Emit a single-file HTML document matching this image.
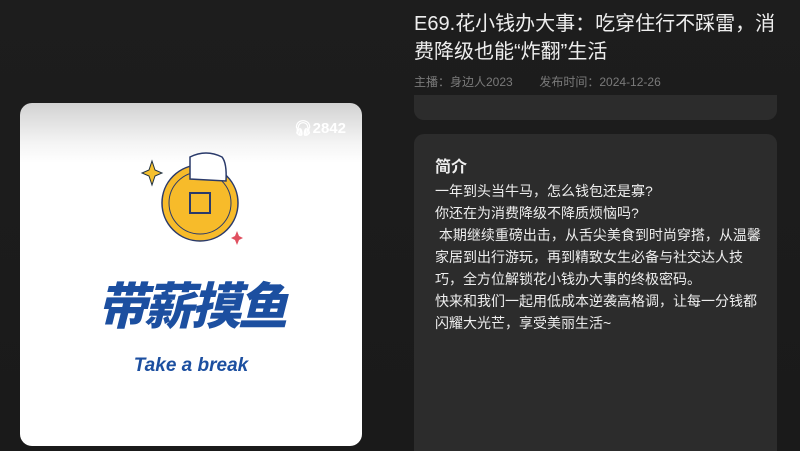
<!DOCTYPE html>
<html><head><meta charset="utf-8"><style>
*{margin:0;padding:0;box-sizing:border-box}
html,body{width:800px;height:451px;overflow:hidden}
body{background:linear-gradient(#1d1d1d,#1a1a1a);font-family:"Liberation Sans","Noto Sans CJK SC",sans-serif;position:relative}
.cover{position:absolute;left:20px;top:103px;width:342px;height:343px;border-radius:12px;overflow:hidden;background:linear-gradient(#d2d2d2 0,#f4f4f4 40px,#fff 60px)}
.cnt{position:absolute;right:16px;top:16px;color:#fff;font-weight:bold;font-size:15px}
.big{position:absolute;left:56px;top:164px;width:230px;text-align:center;font-size:50px;font-weight:900;color:#1c4fa0;font-style:italic;letter-spacing:-3px;font-family:"Noto Sans CJK SC",sans-serif}
.tab{position:absolute;left:0;width:342px;top:252px;text-align:center;font-size:19px;font-weight:bold;font-style:italic;color:#1c4fa0}
h1{position:absolute;left:414px;top:10px;white-space:nowrap;color:#eee;font-size:20px;font-weight:normal;line-height:28px}
.meta{position:absolute;left:414px;top:73px;font-size:12px;color:#7a7a7a}
.strip{position:absolute;left:414px;top:95px;width:363px;height:25px;background:#2c2c2c;border-radius:0 0 10px 10px}
.card{position:absolute;left:414px;top:134px;width:363px;height:317px;background:#2c2c2c;border-radius:10px 10px 0 0}
.card h2{position:absolute;left:21px;top:19px;font-size:16px;color:#eee}
.card p{position:absolute;left:21px;top:46px;white-space:nowrap;font-size:14px;line-height:22px;color:#eee}
</style></head><body>
<div class="cover">
<div class="cnt">🎧︎2842</div>
<svg style="position:absolute;left:0;top:0" width="342" height="200">
<path d="M132 58 l3 9 l7 3 l-7 3 l-3 9 l-3 -9 l-7 -3 l7 -3z" fill="#f5c02e" stroke="#234" stroke-width="1"/>
<path d="M217 128 l2 5 l4 2 l-4 2 l-2 5 l-2 -5 l-4 -2 l4 -2z" fill="#e05060"/>
<circle cx="180" cy="100" r="38" fill="#f7bb2a" stroke="#2a3a6a" stroke-width="1.5"/>
<circle cx="180" cy="100" r="31" fill="none" stroke="#2a3a6a" stroke-width="1"/>
<rect x="170" y="90" width="20" height="20" fill="none" stroke="#2a3a6a" stroke-width="2"/>
<path d="M170 76 v-22 q16 -8 32 0 q5 6 4 24 z" fill="#fff" stroke="#2a3a6a" stroke-width="1.5"/>
</svg>
<div class="big">带薪摸鱼</div>
<div class="tab">Take a break</div>
</div>
<h1>E69.花小钱办大事：吃穿住行不踩雷，消<br>费降级也能“炸翻”生活</h1>
<div class="meta">主播：身边人2023&nbsp;&nbsp;&nbsp;&nbsp;&nbsp;&nbsp;&nbsp;&nbsp;发布时间：2024-12-26</div>
<div class="strip"></div>
<div class="card"><h2>简介</h2>
<p>一年到头当牛马，怎么钱包还是寡?<br>你还在为消费降级不降质烦恼吗?<br>&nbsp;本期继续重磅出击，从舌尖美食到时尚穿搭，从温馨<br>家居到出行游玩，再到精致女生必备与社交达人技<br>巧，全方位解锁花小钱办大事的终极密码。<br>快来和我们一起用低成本逆袭高格调，让每一分钱都<br>闪耀大光芒，享受美丽生活~</p></div>
</body></html>
